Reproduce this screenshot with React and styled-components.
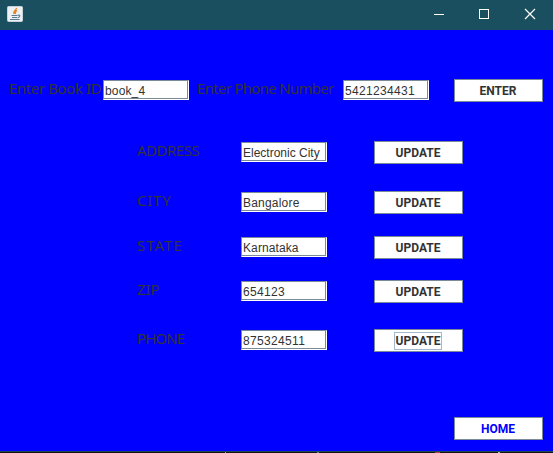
import React from "react";
import styled, { createGlobalStyle } from "styled-components";

const GlobalStyle = createGlobalStyle`
  * { box-sizing: border-box; }
  body { margin: 0; overflow: hidden; }
`;

const Window = styled.div`
  width: 553px;
  height: 453px;
  display: flex;
  flex-direction: column;
  background: #0000ff;
  overflow: hidden;
`;

const TitleBar = styled.header`
  height: 30px;
  flex: none;
  display: flex;
  align-items: flex-start;
  justify-content: space-between;
  padding: 6px 15px 0 7px;
  background: #1a4f5f;
`;

const WindowControls = styled.div`
  display: flex;
  gap: 30px;
`;

const Content = styled.main`
  flex: 1;
  display: flex;
  flex-direction: column;
`;

const SearchRow = styled.div`
  display: grid;
  grid-template-columns: 94px 94px 146px 111px 89px;
  align-items: start;
  height: 23px;
  margin: 49px 0 0 9px;
`;

const RecordRow = styled.div`
  display: grid;
  grid-template-columns: 104px 133px 89px;
  align-items: start;
  height: 23px;
  margin: ${(p) => p.$gap}px 0 0 137px;
`;

const Footer = styled.footer`
  display: flex;
  justify-content: flex-end;
  margin: 65px 10px 0 0;
`;

const Label = styled.label`
  font: 15px/18px "Noto Sans", sans-serif;
  letter-spacing: ${(p) => p.$tracking || 0}px;
  color: #333333;
  white-space: nowrap;
`;

const Field = styled.input`
  width: 86px;
  height: 20px;
  margin: 1px 0 0;
  padding: 2px 0 0 1px;
  border: 1px solid;
  border-color: #7a8a99 #fff #fff #7a8a99;
  border-radius: 0;
  outline: 0;
  background: #fff;
  box-shadow: inset -1px -1px 0 #7a8a99, inset 1px 1px 0 #fff;
  font: 12px "Liberation Sans", Arial, sans-serif;
  letter-spacing: ${(p) => p.$tracking || 0}px;
  color: #333333;
`;

const Button = styled.button`
  width: 89px;
  height: 23px;
  display: flex;
  align-items: center;
  justify-content: center;
  padding: 0 1px 0 0;
  border: 1px solid #7a8a99;
  background: #fff;
  font: bold 12px "Roboto", sans-serif;
  color: ${(p) => (p.$primary ? "#0000ff" : "#333333")};
`;

const ButtonText = styled.span`
  height: 18px;
  padding: 0 0.5px;
  line-height: 17px;
  border: 1px solid ${(p) => (p.$focused ? "#a3b8cc" : "transparent")};
`;

const BottomEdge = styled.div`
  display: flex;
  height: 2px;
  flex: none;
  margin-top: auto;
  border-top: 1px solid #244a58;
  background: #101418;
`;

const EdgeMark = styled.i`
  width: ${(p) => p.$width}px;
  height: 1px;
  margin-left: ${(p) => p.$before}px;
  background: ${(p) => p.$color};
`;

const records = [
  { label: "ADDRESS", labelTracking: -0.5, value: "Electronic City", gap: 39 },
  { label: "CITY", labelTracking: 0.75, value: "Bangalore", tracking: 0.2, gap: 27 },
  { label: "STATE", labelTracking: 1, value: "Karnataka", tracking: 0.1, gap: 22 },
  { label: "ZIP", labelTracking: -0.1, value: "654123", tracking: 0.33, gap: 21 },
  { label: "PHONE", labelTracking: -0.9, value: "875324511", tracking: 0.33, gap: 26, focused: true },
];

function JavaIcon() {
  return (
    <svg width="16" height="16" viewBox="0 0 16 16">
      <rect x=".5" y=".5" width="15" height="15" rx="1" fill="#edf1f3" stroke="#c7d3d9" />
      <path d="M9.4 2C10 4 5.4 4.8 7.2 8M10.2 4.7C8 5.5 8 6.4 8.6 8" fill="none" stroke="#e98322" strokeWidth="1.4" />
      <path d="M4.5 9.5h6M5 11.5h5M3 13.5h9.5M10.8 9.2c3-.7 2.6 2-.3 2.5" fill="none" stroke="#587a94" strokeWidth="1.1" />
    </svg>
  );
}

export default function App() {
  return (
    <>
      <GlobalStyle />
      <Window>
        <TitleBar>
          <JavaIcon />
          <WindowControls>
            <svg width="16" height="16" stroke="#fff">
              <path d="M4 8.5h10" />
            </svg>
            <svg width="16" height="16" stroke="#fff" fill="none">
              <rect x="3.5" y="3.5" width="9" height="9" />
            </svg>
            <svg width="16" height="16" stroke="#fff" strokeWidth="1.2">
              <path d="M3 3l10 10M13 3L3 13" />
            </svg>
          </WindowControls>
        </TitleBar>
        <Content>
          <SearchRow>
            <Label $tracking={-0.4}>Enter Book ID</Label>
            <Field defaultValue="book_4" $tracking={0.15} />
            <Label $tracking={-0.7}>Enter Phone Number</Label>
            <Field defaultValue="5421234431" $tracking={0.33} />
            <Button><ButtonText>ENTER</ButtonText></Button>
          </SearchRow>
          {records.map((r) => (
            <RecordRow key={r.label} $gap={r.gap}>
              <Label $tracking={r.labelTracking}>{r.label}</Label>
              <Field defaultValue={r.value} $tracking={r.tracking} />
              <Button><ButtonText $focused={r.focused}>UPDATE</ButtonText></Button>
            </RecordRow>
          ))}
          <Footer>
            <Button $primary><ButtonText>HOME</ButtonText></Button>
          </Footer>
          <BottomEdge>
            <EdgeMark $before={225} $width={1} $color="#8b9297" />
            <EdgeMark $before={91} $width={2} $color="#5f8a9a" />
            <EdgeMark $before={116} $width={5} $color="#b73d3d" />
            <EdgeMark $before={58} $width={2} $color="#a9bcc2" />
          </BottomEdge>
        </Content>
      </Window>
    </>
  );
}
